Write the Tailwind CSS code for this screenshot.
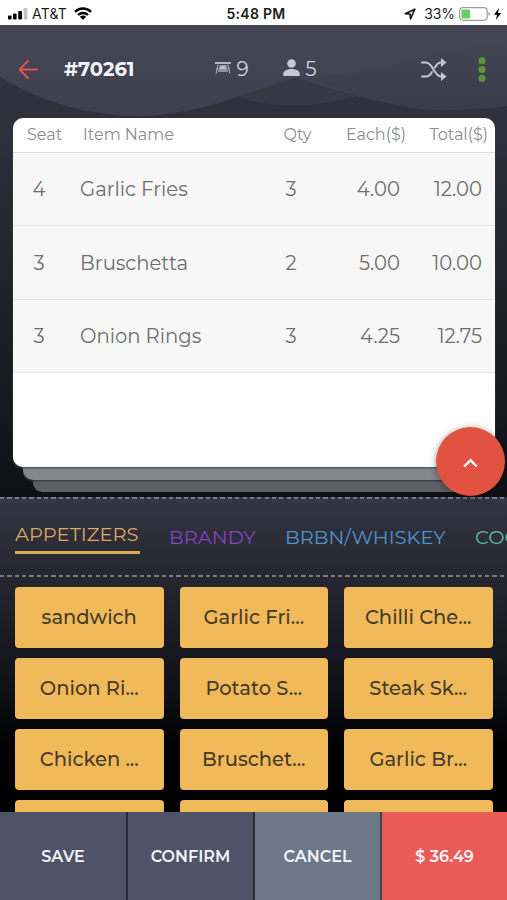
<!DOCTYPE html>
<html lang="en">
<head>
<meta charset="utf-8">
<meta name="viewport" content="width=device-width, initial-scale=1">
<title>Order #70261</title>
<script src="https://cdn.jsdelivr.net/npm/@tailwindcss/browser@4"></script>
</head>
<body class="bg-black">
<div class="w-[507px] h-[900px] flex flex-col overflow-hidden font-['Montserrat','Inter',sans-serif] whitespace-nowrap">

  <!-- status bar -->
  <div class="h-[25px] shrink-0 bg-white grid grid-cols-[1fr_auto_1fr] items-center text-[#1c1c1c] leading-none pt-[2px] font-['Inter',sans-serif]">
    <div class="flex items-center pl-2">
      <svg class="w-5 h-3 shrink-0" viewBox="0 0 20 12"><g fill="#000"><rect y="7.500" width="3.600" height="4" rx="1"/><rect x="5" y="5.500" width="3.600" height="6" rx="1"/><rect x="10.200" y="3" width="3.800" height="8.500" rx="1"/></g><rect x="15.600" y="0" width="3.800" height="11.500" rx="1" fill="#c4c4c4"/></svg>
      <span class="ml-1 text-[14px] tracking-[0.200px]">AT&amp;T</span>
      <svg class="w-[18px] h-[13px] ml-[7px]" viewBox="0 0 18 13"><path d="M1 4.800a11.500 11.500 0 0 1 16 0M4 8a7.300 7.300 0 0 1 10 0" fill="none" stroke="#000" stroke-width="2.400"/><path d="M9 12.800 5.800 9.700a4.600 4.600 0 0 1 6.400 0z"/></svg>
    </div>
    <div class="text-[14px] font-semibold pl-[5px] tracking-[0.300px]">5:48 PM</div>
    <div class="flex items-center justify-end pr-[6px]">
      <svg class="w-3 h-3" viewBox="0 0 12 12"><path d="M1.200 5.800 10.800 1.200 6.600 10.800 6 6z" fill="none" stroke="#111" stroke-width="1.600" stroke-linejoin="round"/></svg>
      <span class="ml-[8px] text-[14px] tracking-[-0.100px]">33%</span>
      <svg class="w-8 h-[14px] ml-[4px]" viewBox="0 0 32 14"><rect x=".7" y=".7" width="27.500" height="12.600" rx="3.200" fill="none" stroke="#9b9b9b" stroke-width="1.200"/><rect x="2.500" y="2.500" width="8.500" height="9" rx="1" fill="#63cf65"/><path d="M29.500 4.800q3 2.200 0 4.400z" fill="#9b9b9b"/></svg>
      <svg class="w-[7px] h-[12px] ml-[3px]" viewBox="0 0 7 12"><path d="M5 0 0 6.700h3L2 12l5-7H4z"/></svg>
    </div>
  </div>

  <!-- order area -->
  <div class="h-[472px] shrink-0 relative bg-linear-to-b from-[#454655] via-[#2e2e3a] via-25% to-[#101115]">
    <svg class="absolute left-0 top-0 w-[507px] h-[130px]" viewBox="0 0 507 130">
      <defs>
        <linearGradient id="sky" gradientUnits="userSpaceOnUse" x1="0" y1="0" x2="0" y2="92"><stop offset="0" stop-color="#454656"/><stop offset="1" stop-color="#3f404f"/></linearGradient>
        <linearGradient id="bowl" gradientUnits="userSpaceOnUse" x1="0" y1="20" x2="0" y2="86"><stop offset="0" stop-color="#434453"/><stop offset="1" stop-color="#3a3c48"/></linearGradient>
        <linearGradient id="base" x1="0" y1="0" x2="0" y2="1"><stop offset="0" stop-color="#343541"/><stop offset="1" stop-color="#2e2e3a"/></linearGradient>
      </defs>
      <rect width="507" height="130" fill="url(#base)"/>
      <path d="M0 0H507V60L356 71L295 53Q267 62 237 72Q180 91 140 91Q65 91 0 52z" fill="url(#sky)"/>
      <path d="M295 53Q360 50 410 36Q460 20 507 20V81Q470 86 430 85Q400 82 356 71Q325 58 295 53z" fill="url(#bowl)"/>
      <path d="M237 72Q262 65 280 57Q294 51 310 57Q335 66 356 71Q325 80 295 80.500Q262 80 237 72z" fill="#383945"/>
    </svg>
    <div class="relative flex flex-col h-full">
      <header class="h-[93px] shrink-0 pl-[18px] pr-[21px] pb-[5px] flex items-center text-[#d2d3dd]">
        <svg class="w-5 h-[19px]" viewBox="0 0 20 19" fill="none" stroke="#e0544f" stroke-width="2" stroke-linecap="round" stroke-linejoin="round"><path d="M19 9.500H1.500M10 1 1.500 9.500 10 18"/></svg>
        <span class="ml-[26px] pt-px w-[151px] text-[19.500px] font-bold text-[#f3f3fa]">#70261</span>
        <svg class="w-4 h-3 mb-[3px]" viewBox="0 0 16 12"><path d="M0 0H16V2H0z" fill="#b6b7c5"/><path d="M3 2.500 1.200 11.500M13 2.500l1.800 9M1 7h3M12 7h3" stroke="#aaaaba" stroke-width="1.200" fill="none"/><path d="M4.500 3h7l1.500 7H3z" fill="#9192a2"/><path d="M6 4h4l1 3H5z" fill="#c2c3d0"/></svg>
        <span class="ml-[5.500px] text-[20px]">9</span>
        <svg class="w-[17px] h-[17px] ml-[34px] mb-[3px]" viewBox="0 0 17 17" fill="#c6c7d4"><circle cx="8.500" cy="4.500" r="4.300"/><path d="M.3 17v-2.400C.3 11.700 4.500 10 8.500 10s8.200 1.700 8.200 4.600V17z"/></svg>
        <span class="ml-[5.500px] text-[20px]">5</span>
        <svg class="w-[26px] h-[23px] ml-auto" viewBox="0 0 26 23"><path d="M1 4.500H5C12 4.500 13 18.500 20 18.500H22M1 18.500H5C8 18.500 9.700 16.500 11 14M14 9.500C15.300 6.700 17 4.500 20 4.500H22" stroke="#c5c6d3" stroke-width="2" fill="none" stroke-linecap="round"/><path d="M20 0 25.500 4.500 20 9zM20 14 25.500 18.500 20 23z" fill="#c5c6d3"/></svg>
        <svg class="w-2 h-[25px] ml-[31px]" viewBox="0 0 8 25" fill="#5c963b"><circle cx="4" cy="3.700" r="3.500"/><circle cx="4" cy="12.500" r="3.500"/><circle cx="4" cy="21.300" r="3.500"/></svg>
      </header>

      <div class="relative mx-[13px] h-[374px]">
        <div class="absolute inset-x-[20px] top-[340px] h-[34px] rounded-[9px] bg-[#5f6067]"></div>
        <div class="absolute inset-x-[10px] top-[330px] h-[32px] rounded-[10px] bg-[#858688] shadow-[0_1px_2px_#333]"></div>
        <div class="relative h-[349px] w-[482px] rounded-[10px] overflow-hidden bg-white text-[#6d6d6d] shadow-[0_1px_2px_#444]">
          <div class="h-[35px] border-b border-[#dedede] grid grid-cols-[70px_187px_55px_81px_82px] items-center text-[16px] text-[#8c8c91]">
            <span class="pl-[14px]">Seat</span><span>Item Name</span><span class="text-center">Qty</span><span class="text-right">Each($)</span><span class="text-right">Total($)</span>
          </div>
          <div class="h-[73.300px] pt-[2px] bg-[#f7f7f7] border-b border-[#e6e6e6] grid grid-cols-[52px_205px_42px_88px_82px] items-center text-[19.600px]">
            <span class="text-center">4</span><span class="pl-[15px]">Garlic Fries</span><span class="text-center">3</span><span class="text-right">4.00</span><span class="text-right">12.00</span>
          </div>
          <div class="h-[73.300px] pt-[2px] bg-[#f7f7f7] border-b border-[#e6e6e6] grid grid-cols-[52px_205px_42px_88px_82px] items-center text-[19.600px]">
            <span class="text-center">3</span><span class="pl-[15px]">Bruschetta</span><span class="text-center">2</span><span class="text-right">5.00</span><span class="text-right">10.00</span>
          </div>
          <div class="h-[73.300px] pt-[2px] bg-[#f7f7f7] border-b border-[#e6e6e6] grid grid-cols-[52px_205px_42px_88px_82px] items-center text-[19.600px]">
            <span class="text-center">3</span><span class="pl-[15px]">Onion Rings</span><span class="text-center">3</span><span class="text-right">4.25</span><span class="text-right">12.75</span>
          </div>
        </div>
      </div>
    </div>
    <button class="absolute z-10 left-[435.500px] top-[402px] size-[69px] rounded-full bg-[#e15241] flex items-center justify-center shadow-[0_1px_7px_#0006]">
      <svg class="w-[15px] h-[10px] mt-[2px]" viewBox="0 0 15 10" fill="none" stroke="#fff" stroke-width="2.400"><path d="m1.200 8.500 6.300-6.300 6.300 6.300"/></svg>
    </button>
  </div>

  <!-- categories -->
  <div class="h-[80px] shrink-0 flex flex-col bg-linear-to-b from-[#343541] to-[#25262f]">
    <div class="h-[2px] shrink-0 bg-[repeating-linear-gradient(90deg,#797a82_0_4.200px,transparent_4.200px_7.350px)]"></div>
    <nav class="flex-1 flex items-center pl-[15px] text-[19.500px] overflow-hidden [&>span]:shrink-0">
      <span class="w-[125px] h-[32px] mt-px border-b-[3px] border-[#deaa58] text-[#d8a95e] flex items-center pb-[2px]">APPETIZERS</span>
      <span class="ml-[29px] w-[87px] text-[#8441c0] pt-[2px]">BRANDY</span>
      <span class="ml-[29px] w-[161px] text-[#4c94d0] pt-[2px]">BRBN/WHISKEY</span>
      <span class="ml-[29px] text-[#5cbd9b] pt-[2px]">COCKTAILS</span>
    </nav>
    <div class="h-[2px] shrink-0 bg-[repeating-linear-gradient(90deg,#797a82_0_4.200px,transparent_4.200px_7.350px)]"></div>
  </div>

  <!-- menu items -->
  <div class="h-[235px] shrink-0 overflow-hidden bg-linear-to-b from-[#252630] via-[#101116] via-50% to-black to-90% pt-[10px] px-[15px]">
    <div class="grid grid-cols-[148.500px_148.500px_148.500px] gap-x-[16px] gap-y-[10px] auto-rows-[61px] text-[19.500px] font-medium text-[#493c28] [&>div]:bg-[#f0ba5b] [&>div]:rounded-[4px] [&>div]:flex [&>div]:items-center [&>div]:justify-center [&>div]:pt-[1px]">
      <div>sandwich</div><div>Garlic Fri...</div><div>Chilli Che...</div>
      <div>Onion Ri...</div><div>Potato S...</div><div>Steak Sk...</div>
      <div>Chicken ...</div><div>Bruschet...</div><div>Garlic Br...</div>
      <div></div><div></div><div></div>
    </div>
  </div>

  <!-- actions -->
  <footer class="h-[88px] shrink-0 grid grid-cols-[128px_127px_127px_125px] text-[16px] font-semibold text-[#f3f4fc] [&>div]:pt-[2px]">
    <div class="bg-[#505268] border-r-2 border-[#292a37] flex items-center justify-center">SAVE</div>
    <div class="bg-[#505268] border-r-2 border-[#292a37] flex items-center justify-center">CONFIRM</div>
    <div class="bg-[#6d7986] border-r-2 border-[#44424d] flex items-center justify-center">CANCEL</div>
    <div class="bg-[#ea5a56] flex items-center justify-center">$ 36.49</div>
  </footer>
</div>
</body>
</html>
